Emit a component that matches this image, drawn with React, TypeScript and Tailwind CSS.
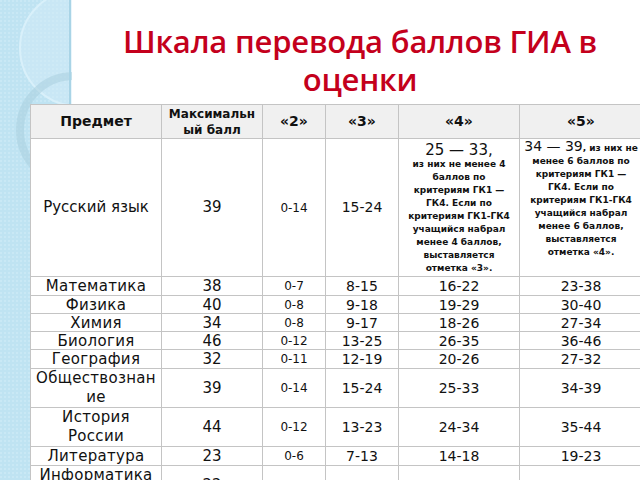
import React from "react";

type Row = {
  name: string[];
  max: string;
  r2: string;
  r3: string;
  r4: string;
  r5: string;
  h: string;
};

const rows: Row[] = [
  { name: ["Математика"], max: "38", r2: "0-7", r3: "8-15", r4: "16-22", r5: "23-38", h: "h-[19px]" },
  { name: ["Физика"], max: "40", r2: "0-8", r3: "9-18", r4: "19-29", r5: "30-40", h: "h-[18px]" },
  { name: ["Химия"], max: "34", r2: "0-8", r3: "9-17", r4: "18-26", r5: "27-34", h: "h-[18px]" },
  { name: ["Биология"], max: "46", r2: "0-12", r3: "13-25", r4: "26-35", r5: "36-46", h: "h-[18px]" },
  { name: ["География"], max: "32", r2: "0-11", r3: "12-19", r4: "20-26", r5: "27-32", h: "h-[19px]" },
  { name: ["Обществознан", "ие"], max: "39", r2: "0-14", r3: "15-24", r4: "25-33", r5: "34-39", h: "h-[39px]" },
  { name: ["История", "России"], max: "44", r2: "0-12", r3: "13-23", r4: "24-34", r5: "35-44", h: "h-[37px]" },
  { name: ["Литература"], max: "23", r2: "0-6", r3: "7-13", r4: "14-18", r5: "19-23", h: "h-[19px]" },
  { name: ["Информатика", "и ИКТ"], max: "22", r2: "0-4", r3: "5-11", r4: "12-17", r5: "18-22", h: "h-[38px]" },
];

const cell = "border border-[#c4c4c4] text-center align-middle p-0 overflow-hidden";

const Backdrop = () => (
  <svg className="absolute left-0 top-0" width="72" height="480" viewBox="0 0 72 480">
    <defs>
      <pattern id="dots" width="4" height="4" patternUnits="userSpaceOnUse">
        <rect width="4" height="4" fill="#bfe3f2" />
        <rect width="2" height="2" fill="#c9e8f5" />
      </pattern>
    </defs>
    <rect width="70" height="480" fill="url(#dots)" />
    <circle cx="78" cy="48" r="58" fill="#d3ecf7" opacity="0.5" />
    <circle cx="78" cy="48" r="58" fill="none" stroke="#d9f0fa" strokeWidth="2" />
    <circle cx="74" cy="130" r="54" fill="none" stroke="#a9cfdf" strokeWidth="8" opacity="0.55" />
    <rect x="69" y="0" width="2" height="480" fill="#a9d4e6" />
  </svg>
);

export default function App() {
  return (
    <div className="relative w-[640px] h-[480px] overflow-hidden bg-white">
      <Backdrop />
      <div className="relative">
        <div className="h-[104px] pl-[80px] pt-[22px] text-center text-[#c4001c] text-[31px] leading-[38px] font-semibold tracking-[-0.2px] [font-family:'Open_Sans',sans-serif]">
          <div>Шкала перевода баллов ГИА в</div>
          <div>оценки</div>
        </div>
        <table className="ml-[30px] w-[612px] border-collapse table-fixed bg-white text-[#111] [font-family:'DejaVu_Sans',sans-serif]">
          <colgroup>
            <col className="w-[131px]" />
            <col className="w-[101px]" />
            <col className="w-[63px]" />
            <col className="w-[73px]" />
            <col className="w-[121px]" />
            <col className="w-[123px]" />
          </colgroup>
          <thead>
            <tr className="h-[34px] bg-[#f0f0f0]">
              <th className={`${cell} text-[14px] font-semibold`}>Предмет</th>
              <th className={`${cell} text-[12px] leading-[16px] font-semibold whitespace-nowrap`}>
                Максимальн
                <br />
                ый балл
              </th>
              <th className={`${cell} text-[14px] font-bold`}>«2»</th>
              <th className={`${cell} text-[14px] font-bold`}>«3»</th>
              <th className={`${cell} text-[14px] font-bold`}>«4»</th>
              <th className={`${cell} text-[14px] font-bold`}>«5»</th>
            </tr>
          </thead>
          <tbody>
            <tr className="h-[138px]">
              <td className={`${cell} text-[15px]`}>Русский язык</td>
              <td className={`${cell} text-[15px]`}>39</td>
              <td className={`${cell} text-[12px]`}>0-14</td>
              <td className={`${cell} text-[14px]`}>15-24</td>
              <td className={`${cell} pt-[2px]`}>
                <div className="text-[15px] leading-[16px]">25 — 33,</div>
                <div className="text-[9px] leading-[13px] font-bold whitespace-nowrap">
                  из них не менее 4<br />
                  баллов по<br />
                  критериям ГК1 —<br />
                  ГК4. Если по<br />
                  критериям ГК1-ГК4<br />
                  учащийся набрал<br />
                  менее 4 баллов,<br />
                  выставляется<br />
                  отметка «3».
                </div>
              </td>
              <td className={`${cell} pb-[16px]`}>
                <div className="text-[9px] leading-[13px] font-bold whitespace-nowrap">
                  <span className="text-[14px] leading-[10px] font-normal">34 — 39</span>, из них не<br />
                  менее 6 баллов по<br />
                  критериям ГК1 —<br />
                  ГК4. Если по<br />
                  критериям ГК1-ГК4<br />
                  учащийся набрал<br />
                  менее 6 баллов,<br />
                  выставляется<br />
                  отметка «4».
                </div>
              </td>
            </tr>
            {rows.map((r, i) => (
              <tr key={i} className={r.h}>
                <td
                  className={`${cell} text-[15px] tracking-[0.3px] whitespace-nowrap ${
                    r.name.length > 1 ? "leading-[19px]" : "leading-[16px]"
                  }`}
                >
                  {r.name.map((line, j) => (
                    <div key={j}>{line}</div>
                  ))}
                </td>
                <td className={`${cell} text-[15px] leading-[16px]`}>{r.max}</td>
                <td className={`${cell} text-[12px] leading-[16px]`}>{r.r2}</td>
                <td className={`${cell} text-[14px] leading-[16px]`}>{r.r3}</td>
                <td className={`${cell} text-[14px] leading-[16px]`}>{r.r4}</td>
                <td className={`${cell} text-[14px] leading-[16px]`}>{r.r5}</td>
              </tr>
            ))}
          </tbody>
        </table>
      </div>
    </div>
  );
}
